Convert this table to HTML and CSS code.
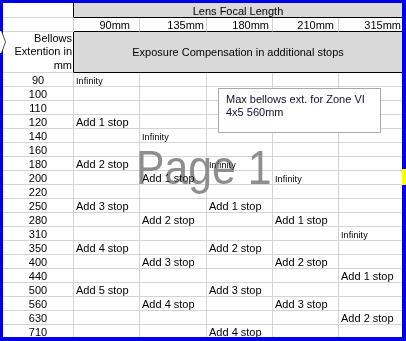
FILE: index.html
```html
<!DOCTYPE html>
<html>
<head>
<meta charset="utf-8">
<link rel="stylesheet" href="styles.css">
</head>
<body>
<div class="sheet">
  <div class="grid">
    <div class="c rh rh-edge"></div>
    <div class="c band">Lens Focal Length</div>

    <div class="c rh"></div>
    <div class="c mm mm-90">90mm</div>
    <div class="c mm">135mm</div>
    <div class="c mm mm-180">180mm</div>
    <div class="c mm mm-210">210mm</div>
    <div class="c mm mm-last">315mm</div>

    <div class="c rh rh-edge title">Bellows<br>Extention in<br>mm</div>
    <div class="c band band-tall">Exposure Compensation in additional stops</div>

    <div class="c rh">90</div><div class="c"><span class="inf">Infinity</span></div><div class="c"></div><div class="c"></div><div class="c"></div><div class="c last"></div>
    <div class="c rh">100</div><div class="c"></div><div class="c"></div><div class="c"></div><div class="c"></div><div class="c last"></div>
    <div class="c rh">110</div><div class="c"></div><div class="c"></div><div class="c"></div><div class="c"></div><div class="c last"></div>
    <div class="c rh">120</div><div class="c">Add 1 stop</div><div class="c"></div><div class="c"></div><div class="c"></div><div class="c last"></div>
    <div class="c rh">140</div><div class="c"></div><div class="c"><span class="inf">Infinity</span></div><div class="c"></div><div class="c"></div><div class="c last"></div>
    <div class="c rh">160</div><div class="c"></div><div class="c"></div><div class="c"></div><div class="c"></div><div class="c last"></div>
    <div class="c rh">180</div><div class="c">Add 2 stop</div><div class="c"></div><div class="c"><span class="inf">Infinity</span></div><div class="c"></div><div class="c last"></div>
    <div class="c rh">200</div><div class="c"></div><div class="c">Add 1 stop</div><div class="c"></div><div class="c"><span class="inf">Infinity</span></div><div class="c last"></div>
    <div class="c rh">220</div><div class="c"></div><div class="c"></div><div class="c"></div><div class="c"></div><div class="c last"></div>
    <div class="c rh">250</div><div class="c">Add 3 stop</div><div class="c"></div><div class="c">Add 1 stop</div><div class="c"></div><div class="c last"></div>
    <div class="c rh">280</div><div class="c"></div><div class="c">Add 2 stop</div><div class="c"></div><div class="c">Add 1 stop</div><div class="c last"></div>
    <div class="c rh">310</div><div class="c"></div><div class="c"></div><div class="c"></div><div class="c"></div><div class="c last"><span class="inf">Infinity</span></div>
    <div class="c rh">350</div><div class="c">Add 4 stop</div><div class="c"></div><div class="c">Add 2 stop</div><div class="c"></div><div class="c last"></div>
    <div class="c rh">400</div><div class="c"></div><div class="c">Add 3 stop</div><div class="c"></div><div class="c">Add 2 stop</div><div class="c last"></div>
    <div class="c rh">440</div><div class="c"></div><div class="c"></div><div class="c"></div><div class="c"></div><div class="c last">Add 1 stop</div>
    <div class="c rh">500</div><div class="c">Add 5 stop</div><div class="c"></div><div class="c">Add 3 stop</div><div class="c"></div><div class="c last"></div>
    <div class="c rh">560</div><div class="c"></div><div class="c">Add 4 stop</div><div class="c"></div><div class="c">Add 3 stop</div><div class="c last"></div>
    <div class="c rh">630</div><div class="c"></div><div class="c"></div><div class="c"></div><div class="c"></div><div class="c last">Add 2 stop</div>
    <div class="c rh">710</div><div class="c"></div><div class="c"></div><div class="c">Add 4 stop</div><div class="c"></div><div class="c last"></div>
  </div>

  <div class="comment">Max bellows ext. for Zone VI<br>4x5 560mm</div>
  <div class="watermark">Page 1</div>
  <div class="marker"></div>
  <svg class="notch" width="7" height="22" viewBox="0 0 7 22">
    <polygon points="0,0 1.5,0 5.5,11 1.5,22 0,22" fill="#ffffff"/>
    <polyline points="1.5,0 5.5,11 1.5,22" fill="none" stroke="#222222" stroke-width="0.8"/>
  </svg>
</div>
</body>
</html>
```

FILE: styles.css
```css
body {
  margin: 0;
  background: #ffffff;
}

.sheet {
  position: relative;
  width: 406px;
  height: 341px;
  box-sizing: border-box;
  border-style: solid;
  border-color: #0000e6;
  border-width: 3px 4px 4px 3px;
  background: #ffffff;
  font-family: "Liberation Sans", Arial, sans-serif;
  font-size: 11px;
  color: #000000;
}

.grid {
  display: grid;
  grid-template-columns: 71px 66px 67px 66px 66px 63px;
  grid-template-rows: 15px 14px 41px repeat(19, 14px);
  height: 100%;
  overflow: hidden;
}

.c {
  box-sizing: border-box;
  border-right: 1px solid #d4d4d4;
  border-bottom: 1px solid #d4d4d4;
  padding: 1px 0 0 2px;
  line-height: 12px;
  white-space: nowrap;
}

.c.last {
  border-right: none;
}

.rh {
  text-align: center;
  padding-left: 0;
}

.rh-edge {
  border-right-color: #000000;
}

.band {
  grid-column: 2 / -1;
  background: #d9d9d9;
  border-right: none;
  border-bottom-color: #000000;
  text-align: center;
  padding-top: 2px;
  padding-left: 0;
}

.band-tall {
  display: flex;
  align-items: center;
  justify-content: center;
  padding: 0 0 1px 0;
}

.title {
  display: flex;
  flex-direction: column;
  justify-content: flex-end;
  text-align: right;
  line-height: 13.5px;
  padding: 0 1px 0 0;
}

.mm {
  text-align: right;
  padding-left: 0;
  padding-right: 2px;
  border-bottom-color: #000000;
}

.mm-90 { padding-right: 9px; }
.mm-180 { padding-right: 3px; }
.mm-210 { padding-right: 4px; }
.mm-last { padding-right: 1px; border-right: none; }

.inf {
  font-size: 9px;
  letter-spacing: 0.1px;
}

.comment {
  position: absolute;
  left: 215px;
  top: 85px;
  width: 163px;
  height: 45px;
  box-sizing: border-box;
  border: 1px solid #a9a9a9;
  background: #ffffff;
  padding: 4px 0 0 7px;
  line-height: 13px;
  color: #101030;
  white-space: nowrap;
}

.watermark {
  position: absolute;
  left: 133px;
  top: 141px;
  font-size: 48px;
  line-height: 48px;
  color: #8e8e8e;
  transform: scaleX(0.89);
  transform-origin: left top;
  mix-blend-mode: darken;
  white-space: nowrap;
  pointer-events: none;
}

.marker {
  position: absolute;
  right: -4px;
  top: 166px;
  width: 4px;
  height: 16px;
  background: #ffff00;
}

.notch {
  position: absolute;
  left: -3px;
  top: 28px;
  display: block;
}
```
